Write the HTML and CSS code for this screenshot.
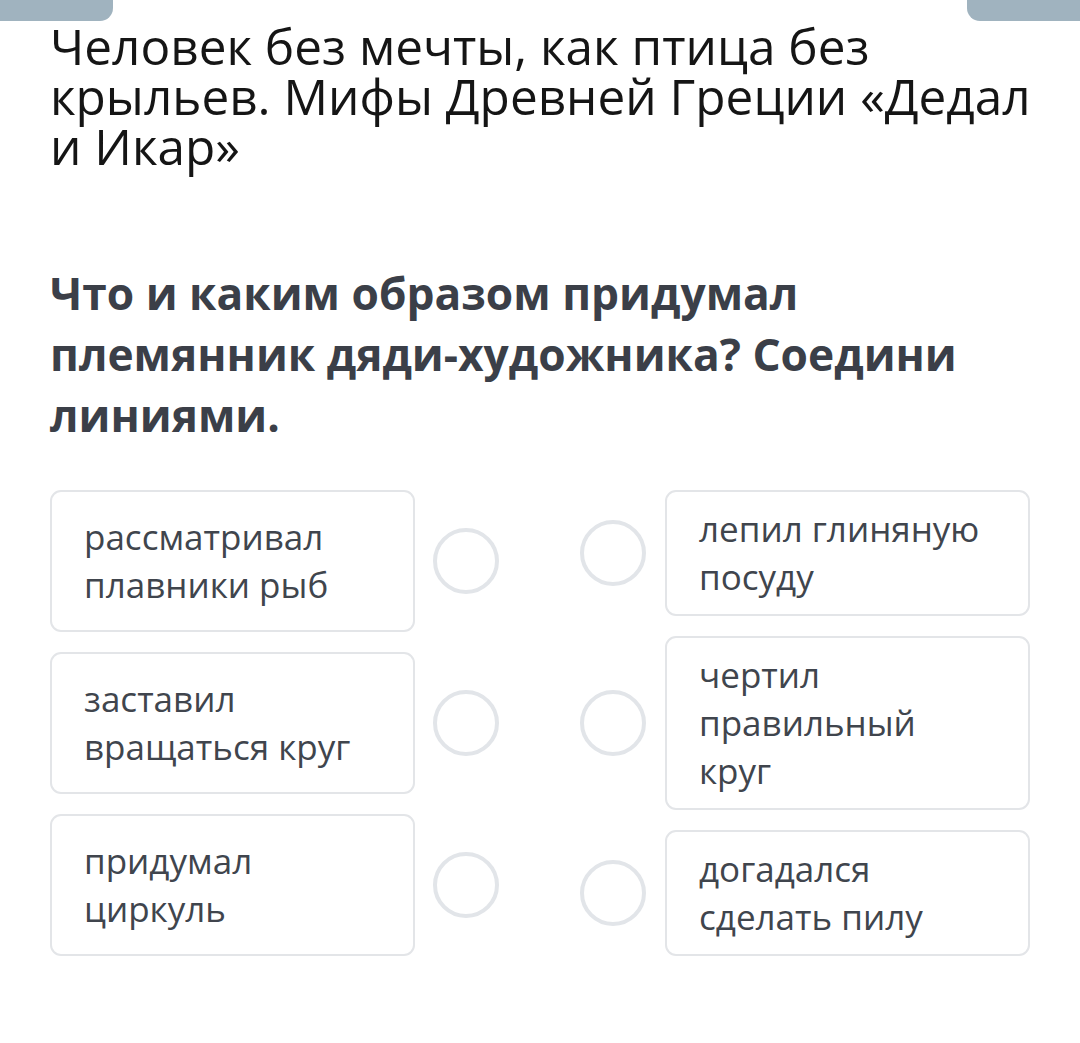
FILE: index.html
```html
<!DOCTYPE html>
<html lang="ru">
<head>
<meta charset="utf-8">
<link rel="stylesheet" href="styles.css">
</head>
<body>
<div class="topbar">
  <div class="tab tab-left"></div>
  <div class="tab tab-right"></div>
</div>
<main class="page">
  <h1 class="title">Человек без мечты, как птица без крыльев. Мифы Древней Греции «Дедал и Икар»</h1>
  <h2 class="question">Что и каким образом придумал племянник дяди-художника? Соедини линиями.</h2>
  <div class="match">
    <div class="col col-left">
      <div class="row">
        <div class="card card-left">рассматривал плавники рыб</div>
        <div class="dot"></div>
      </div>
      <div class="row">
        <div class="card card-left">заставил вращаться круг</div>
        <div class="dot"></div>
      </div>
      <div class="row">
        <div class="card card-left">придумал циркуль</div>
        <div class="dot"></div>
      </div>
    </div>
    <div class="col col-right">
      <div class="row">
        <div class="dot"></div>
        <div class="card card-right">лепил глиняную посуду</div>
      </div>
      <div class="row">
        <div class="dot"></div>
        <div class="card card-right">чертил правильный круг</div>
      </div>
      <div class="row">
        <div class="dot"></div>
        <div class="card card-right">догадался сделать пилу</div>
      </div>
    </div>
  </div>
</main>
</body>
</html>
```
FILE: styles.css
```css
* { box-sizing: border-box; }
html, body { margin: 0; padding: 0; background: #ffffff; }
body {
  font-family: "Open Sans", "Noto Sans", sans-serif;
  width: 1080px;
  height: 1043px;
  overflow: hidden;
}
.topbar {
  display: flex;
  justify-content: space-between;
  height: 21px;
}
.tab {
  width: 113px;
  height: 21px;
  background: #a0b3bf;
}
.tab-left { border-bottom-right-radius: 13px; }
.tab-right { border-bottom-left-radius: 13px; }
.page {
  padding: 0 50px 0 50px;
}
.title {
  margin: 0 -20px 0 0;
  font-weight: 400;
  font-size: 49.5px;
  line-height: 50px;
  color: #151515;
}
.question {
  margin: 92px 0 0 0;
  max-width: 970px;
  font-weight: 700;
  font-size: 44.3px;
  line-height: 61px;
  color: #3b3f48;
}
.match {
  margin-top: 44px;
  display: flex;
  justify-content: space-between;
}
.col {
  display: flex;
  flex-direction: column;
  gap: 20px;
}
.row {
  display: flex;
  align-items: center;
}
.col-left .row { gap: 18px; }
.col-right .row { gap: 19px; }
.card {
  width: 365px;
  border: 2px solid #e3e5e8;
  border-radius: 11px;
  background: #fff;
  font-size: 35px;
  line-height: 48px;
  color: #40454d;
  padding: 0 38px 0 32px;
}
.card-left {
  height: 142px;
  display: flex;
  align-items: center;
}
.card-right {
  padding-top: 13px;
  padding-bottom: 13px;
}
.dot {
  width: 66px;
  height: 66px;
  border-radius: 50%;
  border: 4px solid #e2e5e9;
  flex: none;
}
```
